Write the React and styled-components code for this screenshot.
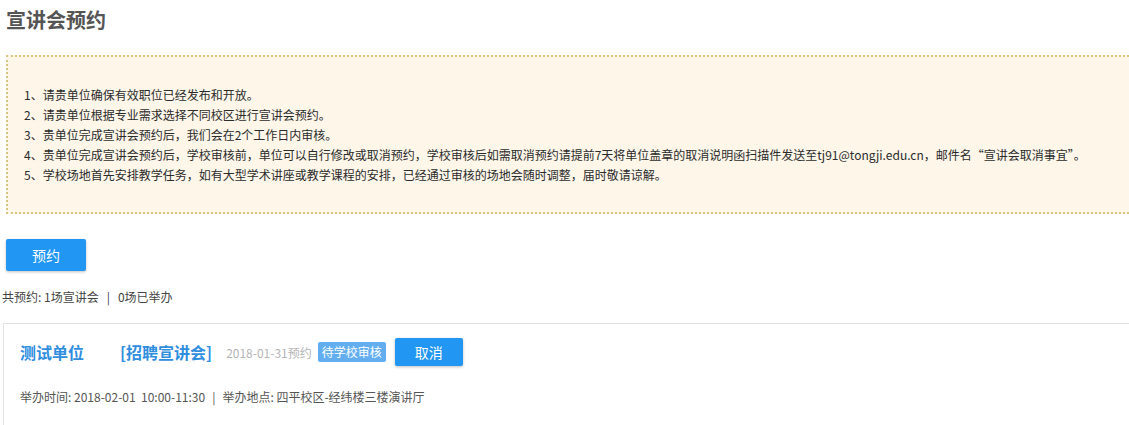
import React from "react";
import styled, { createGlobalStyle } from "styled-components";

const GlobalStyle = createGlobalStyle`
  html, body {
    margin: 0;
    padding: 0;
    background: #fff;
    overflow: hidden;
  }
  body {
    font-family: "Noto Sans CJK SC", "Noto Sans", sans-serif;
    color: #333;
  }
`;

const Page = styled.div`
  width: 1129px;
  height: 425px;
  overflow: hidden;
`;

const Title = styled.h2`
  margin: 0 0 0 6px;
  padding-top: 6px;
  height: 49px;
  font-size: 20px;
  line-height: 28px;
  font-weight: bold;
  color: #555;
`;

const Notice = styled.div`
  margin: 0 -40px 0 6px;
  padding: 28px 16px 27px 16px;
  background: #fdf6e9;
  border: 2px dotted #d8c67e;
  font-family: "Noto Sans CJK SC", sans-serif;
  font-size: 12px;
  line-height: 20px;
  color: #2b2b2b;
  p {
    margin: 0;
    white-space: nowrap;
  }
`;

const PrimaryButton = styled.button`
  display: flex;
  align-items: center;
  justify-content: center;
  width: ${(p) => p.$w}px;
  height: ${(p) => p.$h}px;
  padding: 0;
  border: none;
  border-radius: 2px;
  background: #2196f3;
  color: #fff;
  font-family: "Noto Sans CJK SC", sans-serif;
  font-size: 14px;
  box-shadow: 0 1px 3px rgba(0, 0, 0, 0.25);
  cursor: pointer;
`;

const ButtonRow = styled.div`
  margin: 25px 0 0 6px;
`;

const Stats = styled.div`
  margin: 17px 0 0 2px;
  font-size: 12px;
  line-height: 18px;
  color: #444;
  span {
    margin: 0 8px;
  }
`;

const Card = styled.div`
  margin: 17px -40px 0 3px;
  padding: 14px 16px 20px;
  border-top: 1px solid #e3e3e3;
  border-left: 1px solid #e3e3e3;
`;

const CardHead = styled.div`
  display: flex;
  align-items: center;
  height: 28px;
`;

const Company = styled.span`
  font-size: 16px;
  font-weight: bold;
  color: #2f8ede;
  margin-right: ${(p) => p.$gap}px;
`;

const DateText = styled.span`
  font-size: 12px;
  color: #b5b5b5;
  margin-left: 14px;
`;

const Badge = styled.span`
  margin-left: 6px;
  padding: 0 4px;
  height: 20px;
  line-height: 20px;
  font-size: 12px;
  background: #63aef0;
  color: #fff;
  border-radius: 2px;
`;

const CancelWrap = styled.div`
  margin-left: 9px;
`;

const Detail = styled.div`
  margin-top: 22px;
  font-size: 12px;
  line-height: 18px;
  color: #555;
  white-space: pre;
  span {
    margin: 0 7px;
  }
`;

const notes = [
  "1、请贵单位确保有效职位已经发布和开放。",
  "2、请贵单位根据专业需求选择不同校区进行宣讲会预约。",
  "3、贵单位完成宣讲会预约后，我们会在2个工作日内审核。",
  "4、贵单位完成宣讲会预约后，学校审核前，单位可以自行修改或取消预约，学校审核后如需取消预约请提前7天将单位盖章的取消说明函扫描件发送至tj91@tongji.edu.cn，邮件名“宣讲会取消事宜”。",
  "5、学校场地首先安排教学任务，如有大型学术讲座或教学课程的安排，已经通过审核的场地会随时调整，届时敬请谅解。",
];

const App = () => {
  return (
    <Page>
      <GlobalStyle />
      <Title>宣讲会预约</Title>
      <Notice>
        {notes.map((n) => (
          <p key={n}>{n}</p>
        ))}
      </Notice>
      <ButtonRow>
        <PrimaryButton $w={80} $h={32}>预约</PrimaryButton>
      </ButtonRow>
      <Stats>
        共预约: 1场宣讲会<span>|</span>0场已举办
      </Stats>
      <Card>
        <CardHead>
          <Company $gap={36}>测试单位</Company>
          <Company $gap={0}>[招聘宣讲会]</Company>
          <DateText>2018-01-31预约</DateText>
          <Badge>待学校审核</Badge>
          <CancelWrap>
            <PrimaryButton $w={68} $h={28}>取消</PrimaryButton>
          </CancelWrap>
        </CardHead>
        <Detail>
          举办时间: 2018-02-01  10:00-11:30<span>|</span>举办地点: 四平校区-经纬楼三楼演讲厅
        </Detail>
      </Card>
    </Page>
  );
};

export default App;
